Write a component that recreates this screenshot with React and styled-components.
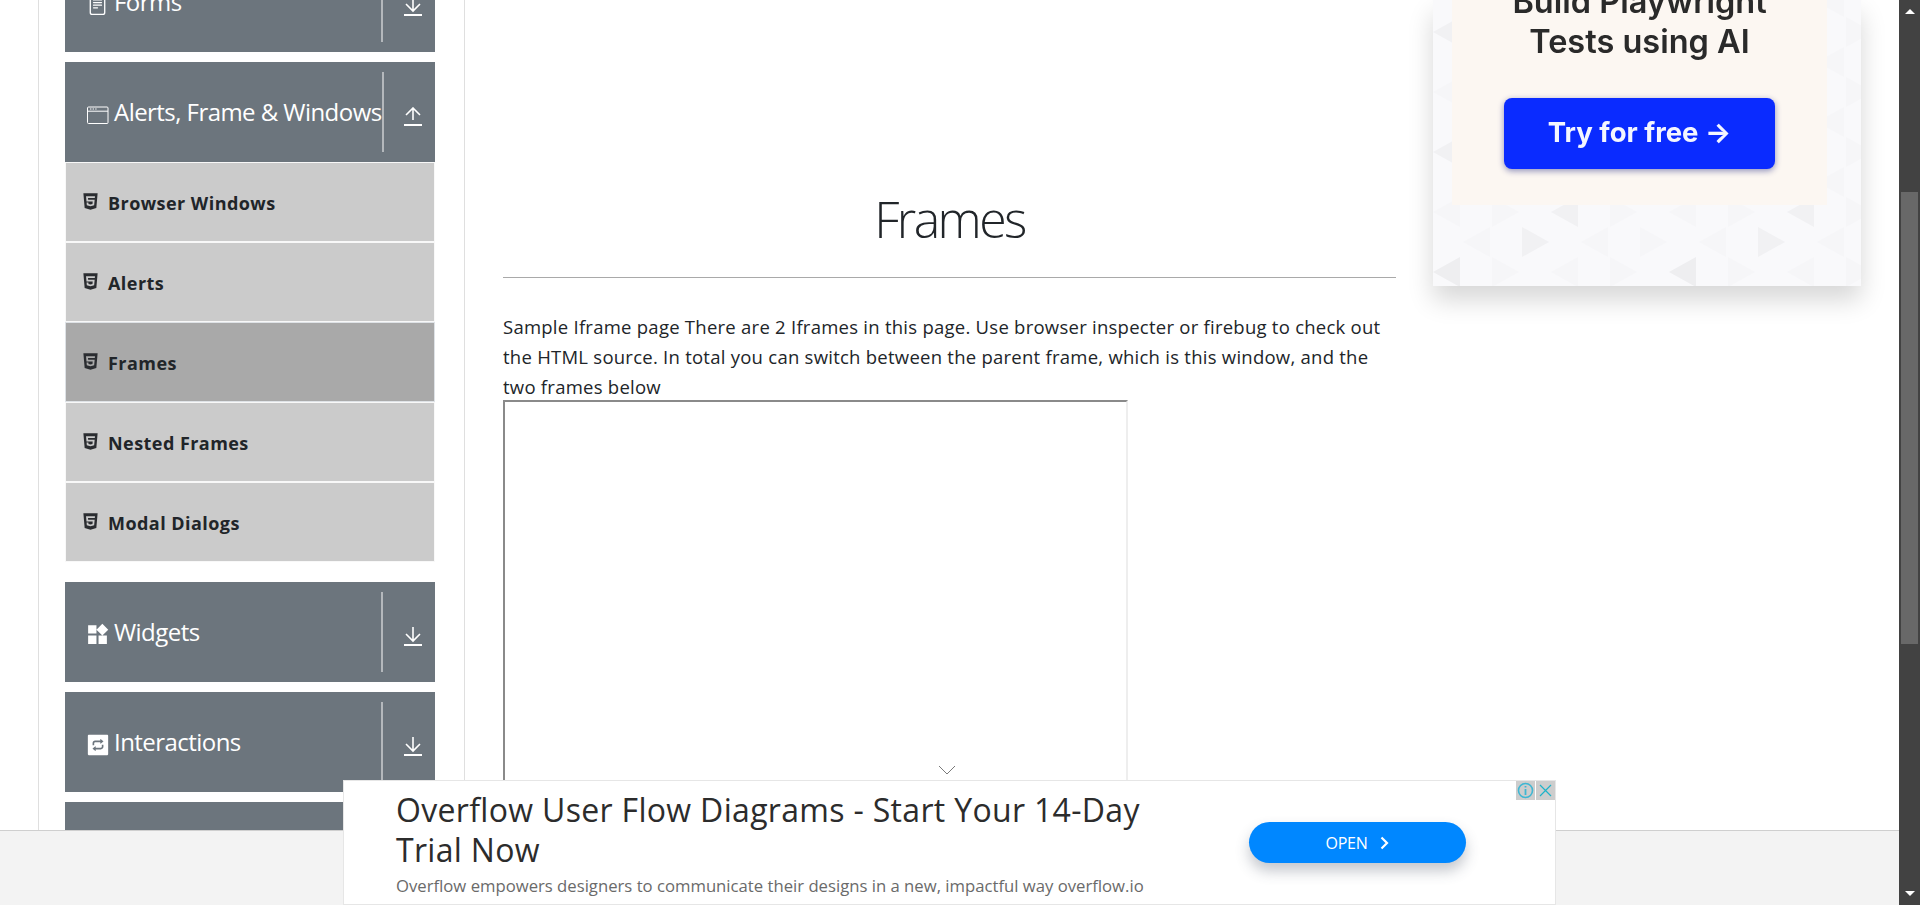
import React from "react";
import styled, { createGlobalStyle } from "styled-components";
import { FaHtml5 } from "react-icons/fa";
import { MdWidgets } from "react-icons/md";
import { AiFillInteraction } from "react-icons/ai";
import { BsFileText } from "react-icons/bs";

const GlobalStyle = createGlobalStyle`
  html, body {
    margin: 0;
    height: 100%;
    overflow: hidden;
    background: #fff;
  }
  * {
    box-sizing: border-box;
  }
`;

const Viewport = styled.div`
  position: relative;
  display: flex;
  width: 1920px;
  height: 905px;
  overflow: hidden;
  font-family: "Open Sans", "Noto Sans", sans-serif;
  color: #212529;
`;
const Page = styled.div`
  display: flex;
  align-items: flex-start;
  width: 1899px;
  height: 905px;
  padding-left: 38px;
  overflow: hidden;
`;

const Sidebar = styled.aside`
  flex: none;
  width: 427px;
  height: 905px;
  padding: 0 29px 0 26px;
  border-left: 1px solid #dfdfdf;
  border-right: 1px solid #dfdfdf;
`;
const Groups = styled.div`
  display: flex;
  flex-direction: column;
  gap: 10px;
  margin-top: -48px;
`;
const GroupHeader = styled.div`
  display: flex;
  align-items: center;
  height: 100px;
  padding: 10px 0 10px 22px;
  background: #6c757d;
  color: #fff;
`;
const HeaderIcon = styled.span`
  display: flex;
  justify-content: center;
  width: 21px;
  margin-right: 6px;
  padding-top: 5px;
  color: #fff;
  svg {
    flex: none;
  }
`;
const HeaderTitle = styled.span`
  flex: 1;
  font-size: 24px;
  line-height: 30px;
  letter-spacing: -0.55px;
  white-space: nowrap;
`;
const HeaderToggle = styled.span`
  display: flex;
  align-items: center;
  justify-content: center;
  align-self: stretch;
  width: 54px;
  padding: 8px 0 0 8px;
  border-left: 2px solid #b4b8bc;
`;
const SubList = styled.ul`
  margin: 0 0 10px;
  padding: 0;
  list-style: none;
`;
const SubItem = styled.li`
  display: flex;
  align-items: center;
  height: 80px;
  padding: 1px 0 0 18px;
  border: 1px solid ${(p) => (p.$active ? "#dee2e6" : "#f8f8f8")};
  background: ${(p) => (p.$active ? "#a9a9a9" : "#cbcbcb")};
  font-size: 18px;
  font-weight: 700;
  letter-spacing: 0.45px;
`;
const SubIcon = styled.span`
  display: flex;
  width: 24px;
  margin-top: -3px;
  color: #2b2d31;
  svg {
    flex: none;
    margin-left: -3px;
  }
`;

const Content = styled.main`
  flex: none;
  width: 893px;
  margin-left: 38px;
`;
const Title = styled.h1`
  margin: 0;
  height: 278px;
  padding-top: 186px;
  border-bottom: 1px solid #a9a9a9;
  font-size: 50px;
  font-weight: 300;
  line-height: 66px;
  letter-spacing: -2.6px;
  text-align: center;
`;
const Intro = styled.p`
  margin: 34px 0 0;
  padding-right: 6px;
  font-size: 18.5px;
  line-height: 30px;
  letter-spacing: 0.25px;
`;
const FrameBox = styled.div`
  width: 625px;
  height: 500px;
  margin-top: -2px;
  border-style: solid;
  border-width: 2px;
  border-color: #8a8a8a #eee #eee #8a8a8a;
`;

const SideAd = styled.aside`
  flex: none;
  width: 428px;
  height: 286px;
  margin-left: 37px;
  padding: 0 34px 0 19px;
  background: #f9f9fb;
  box-shadow: 0 14px 24px rgba(0, 0, 0, 0.16);
  overflow: hidden;
  position: relative;
`;
const Pattern = styled.svg`
  position: absolute;
  left: 0;
  top: 0;
  width: 428px;
  height: 286px;
`;
const SideAdCard = styled.div`
  position: relative;
  display: flex;
  flex-direction: column;
  align-items: center;
  height: 205px;
  background: #fcf7f2;
  font-family: Inter, "Liberation Sans", sans-serif;
`;
const SideAdHead = styled.div`
  margin-top: -18px;
  font-size: 32.5px;
  font-weight: 600;
  line-height: 40px;
  text-align: center;
  color: #2a2a2a;
  filter: blur(0.4px);
`;
const TryButton = styled.div`
  display: flex;
  align-items: center;
  justify-content: center;
  width: 271px;
  height: 71px;
  margin-top: 36px;
  padding-bottom: 3px;
  border-radius: 8px;
  background: #0a2bff;
  box-shadow: 0 2px 6px rgba(10, 20, 120, 0.45);
  color: #f4f6ff;
  font-size: 27.5px;
  font-weight: 700;
  filter: blur(0.4px);
`;

const Scrollbar = styled.div`
  display: flex;
  flex-direction: column;
  align-items: center;
  flex: none;
  width: 21px;
  height: 905px;
  background: #424242;
`;
const ScrollArrow = styled.span`
  flex: none;
  width: 0;
  height: 0;
  margin: ${(p) => (p.$up ? "9px 0 0" : "auto 0 9px")};
  border-left: 5px solid transparent;
  border-right: 5px solid transparent;
  ${(p) =>
    p.$up ? "border-bottom: 5px solid #fff;" : "border-top: 5px solid #fff;"}
`;
const ScrollThumb = styled.div`
  flex: none;
  width: 17px;
  height: 452px;
  margin-top: 178px;
  background: #686868;
`;

const FooterBar = styled.footer`
  position: absolute;
  left: 0;
  bottom: 0;
  width: 1899px;
  height: 75px;
  border-top: 1px solid #cfcfcf;
  background: #f3f3f3;
`;
const Chevron = styled.svg`
  position: absolute;
  left: 938px;
  top: 765px;
  width: 18px;
  height: 10px;
`;
const BottomAd = styled.div`
  position: absolute;
  left: 343px;
  top: 780px;
  display: flex;
  align-items: flex-start;
  width: 1213px;
  height: 125px;
  padding-left: 52px;
  border: 1px solid #e6e6e6;
  background: #fff;
  font-family: "Open Sans", Roboto, sans-serif;
`;
const AdCopy = styled.div`
  flex: none;
  width: 780px;
`;
const AdHeadline = styled.div`
  margin-top: 9px;
  font-size: 32px;
  line-height: 40px;
  letter-spacing: 0.32px;
  color: #2c2c2c;
`;
const AdSub = styled.div`
  margin-top: 4px;
  font-size: 16.7px;
  line-height: 24px;
  color: #6a6a6a;
`;
const OpenButton = styled.div`
  display: flex;
  align-items: center;
  justify-content: center;
  gap: 13px;
  width: 217px;
  height: 41px;
  margin: 41px 0 0 73px;
  border-radius: 21px;
  background: #0087ff;
  box-shadow: 0 8px 14px rgba(60, 70, 90, 0.3);
  color: #fff;
  font-size: 16px;
  letter-spacing: -0.3px;
`;
const AdBadges = styled.div`
  position: absolute;
  top: 0;
  right: 0;
  display: flex;
  gap: 1px;
`;
const AdBadge = styled.span`
  display: flex;
  align-items: center;
  justify-content: center;
  width: 19px;
  height: 19px;
  background: #cdcdcd;
`;

const ArrowIcon = ({ up }) => (
  <svg width="18" height="19" viewBox="0 0 18 19" fill="none" stroke="#fff">
    <path
      d={up ? "M9 13V1M2 8l7-7 7 7" : "M9 0v14M2 7l7 7 7-7"}
      strokeWidth="1.6"
    />
    <path d="M0 18h18" strokeWidth="2" />
  </svg>
);

const WindowIcon = () => (
  <svg width="22" height="18" viewBox="0 0 22 18" fill="none" stroke="#fff">
    <rect x="0.5" y="1" width="20.5" height="16.5" rx="1" strokeWidth="1" />
    <path d="M1 5.2h20" strokeWidth="1" />
    <path d="M3 3h1.4M5.6 3H7M8.2 3h1.4" strokeWidth="1.2" />
  </svg>
);

// triangles behind the side ad, darker towards the bottom
const BackgroundPattern = () => {
  const tiles = [];
  for (let row = 0; row < 10; row += 1) {
    const y = 272 - row * 30;
    for (let col = 0; col < 8; col += 1) {
      const x = col * 59 + (row % 2 ? 30 : 0);
      const strong = (row * 3 + col * 5) % 4 === 0;
      const fill = strong ? (row === 0 ? "#eeeef0" : "#f1f1f3") : "#f6f6f8";
      const points =
        col % 2
          ? `${x},${y - 15} ${x + 27},${y} ${x},${y + 15}`
          : `${x},${y} ${x + 27},${y - 15} ${x + 27},${y + 15}`;
      tiles.push(<polygon key={`${row}-${col}`} points={points} fill={fill} />);
    }
  }
  return <Pattern viewBox="0 0 428 286">{tiles}</Pattern>;
};

const subItems = [
  "Browser Windows",
  "Alerts",
  "Frames",
  "Nested Frames",
  "Modal Dialogs",
];

function Group({ icon, title, up, children }) {
  return (
    <div>
      <GroupHeader>
        <HeaderIcon>{icon}</HeaderIcon>
        <HeaderTitle>{title}</HeaderTitle>
        <HeaderToggle>
          <ArrowIcon up={up} />
        </HeaderToggle>
      </GroupHeader>
      {children}
    </div>
  );
}

export default function App() {
  return (
    <Viewport>
      <GlobalStyle />
      <Page>
        <Sidebar>
          <Groups>
            <Group icon={<BsFileText size={21} />} title="Forms" />
            <Group icon={<WindowIcon />} title="Alerts, Frame & Windows" up>
              <SubList>
                {subItems.map((item) => (
                  <SubItem key={item} $active={item === "Frames"}>
                    <SubIcon>
                      <FaHtml5 size={19} />
                    </SubIcon>
                    {item}
                  </SubItem>
                ))}
              </SubList>
            </Group>
            <Group icon={<MdWidgets size={25} />} title="Widgets" />
            <Group icon={<AiFillInteraction size={26} />} title="Interactions" />
            <GroupHeader />
          </Groups>
        </Sidebar>
        <Content>
          <Title>Frames</Title>
          <Intro>
            Sample Iframe page There are 2 Iframes in this page. Use browser
            inspecter or firebug to check out the HTML source. In total you can
            switch between the parent frame, which is this window, and the two
            frames below
          </Intro>
          <FrameBox />
        </Content>
        <SideAd>
          <BackgroundPattern />
          <SideAdCard>
            <SideAdHead>
              Build Playwright
              <br />
              Tests using AI
            </SideAdHead>
            <TryButton>Try for free →</TryButton>
          </SideAdCard>
        </SideAd>
      </Page>
      <Scrollbar>
        <ScrollArrow $up />
        <ScrollThumb />
        <ScrollArrow />
      </Scrollbar>
      <FooterBar />
      <Chevron viewBox="0 0 18 10" fill="none" stroke="#7a7a7a">
        <path d="M1 1l8 8 8-8" strokeWidth="1" />
      </Chevron>
      <BottomAd>
        <AdCopy>
          <AdHeadline>
            Overflow User Flow Diagrams - Start Your 14-Day
            <br />
            Trial Now
          </AdHeadline>
          <AdSub>
            Overflow empowers designers to communicate their designs in a new,
            impactful way overflow.io
          </AdSub>
        </AdCopy>
        <OpenButton>
          OPEN
          <svg width="9" height="14" viewBox="0 0 9 14" fill="none" stroke="#fff">
            <path d="M1.5 1.5L7 7l-5.5 5.5" strokeWidth="2.2" />
          </svg>
        </OpenButton>
        <AdBadges>
          <AdBadge>
            <svg width="17" height="17" viewBox="0 0 17 17" fill="none" stroke="#3fb7d3">
              <circle cx="8.5" cy="8.5" r="7" strokeWidth="1.6" />
              <path d="M8.5 7v6M8.5 4v1.6" strokeWidth="1.8" />
            </svg>
          </AdBadge>
          <AdBadge>
            <svg width="13" height="13" viewBox="0 0 13 13" fill="none" stroke="#1fb3c9">
              <path d="M1 1l11 11M12 1L1 12" strokeWidth="1.2" />
            </svg>
          </AdBadge>
        </AdBadges>
      </BottomAd>
    </Viewport>
  );
}
